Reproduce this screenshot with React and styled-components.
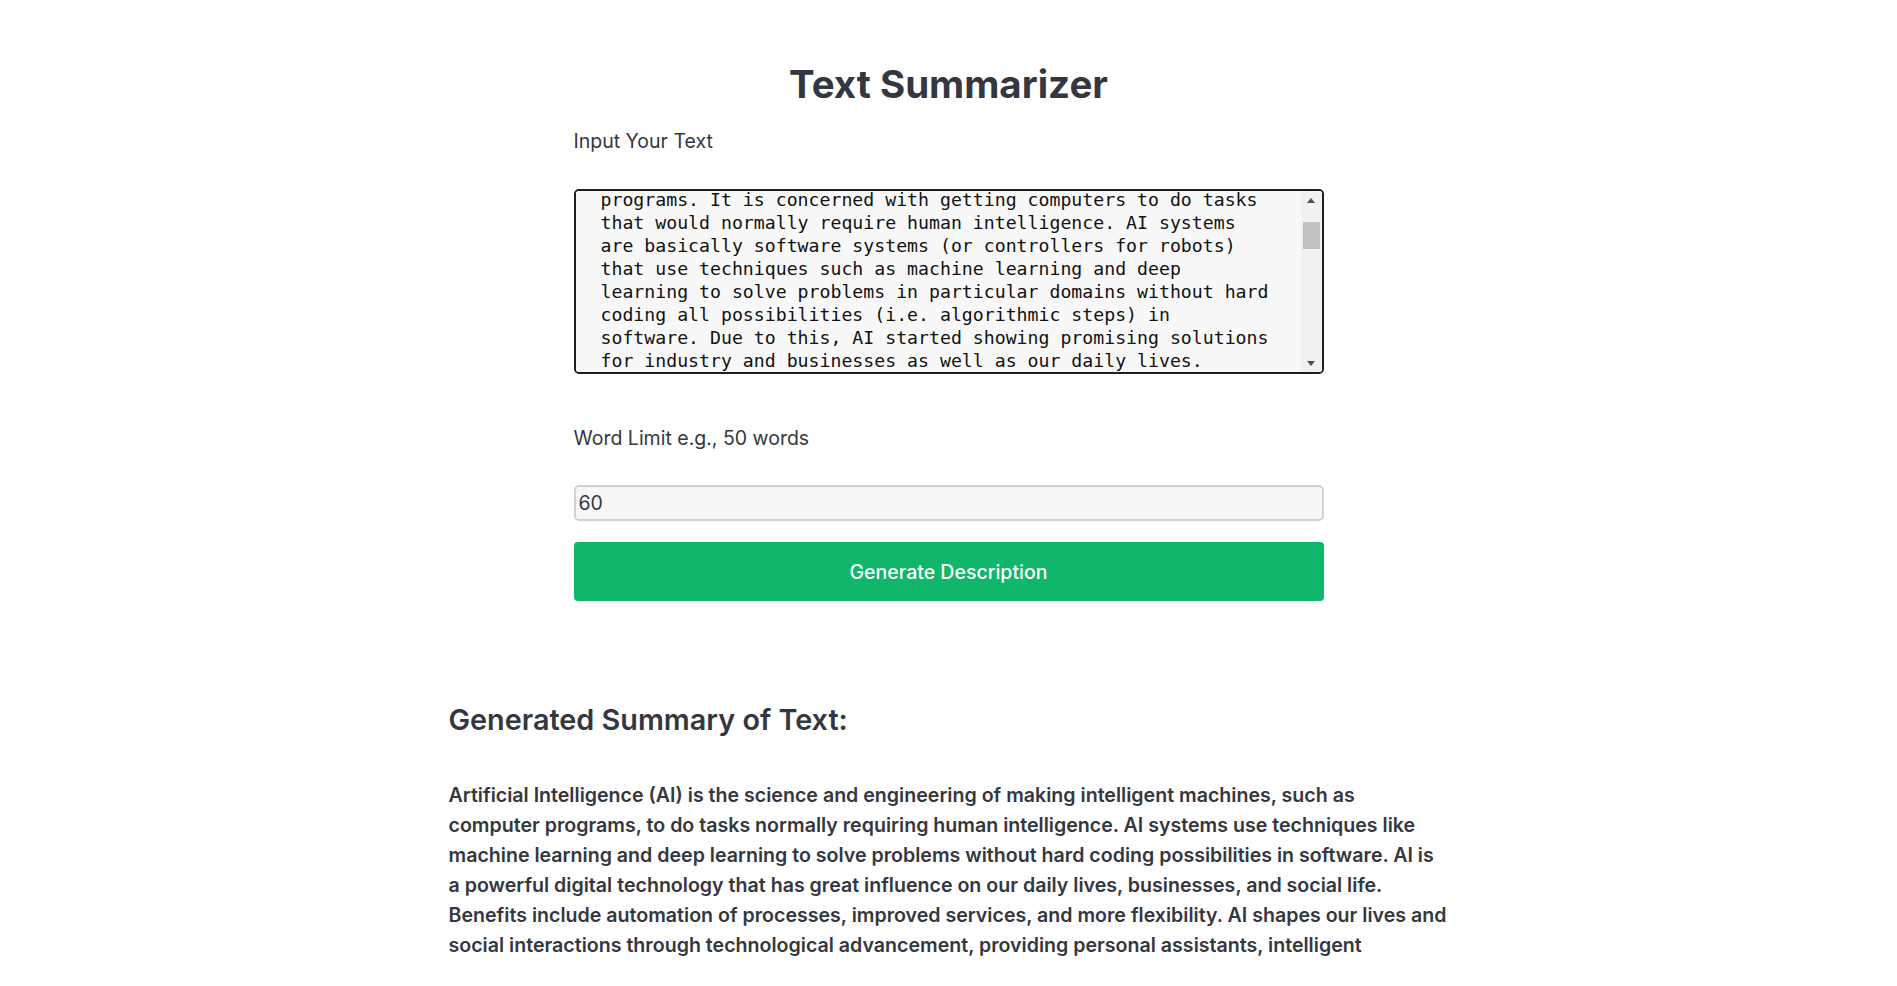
import React, { useLayoutEffect, useRef, useState } from "react";
import styled, { createGlobalStyle } from "styled-components";

const GlobalStyle = createGlobalStyle`
  html, body { margin: 0; padding: 0; background: #ffffff; }
  body { font-family: Inter, "Noto Sans", sans-serif; color: #353740; }
`;

const Page = styled.main`
  padding: 61px 0 40px;
  display: flex;
  flex-direction: column;
  align-items: center;
`;

const Title = styled.h1`
  margin: 0;
  font-size: 38.5px;
  line-height: 46px;
  font-weight: 700;
  color: #353740;
  text-align: center;
`;

const Form = styled.form`
  width: 750px;
  display: flex;
  flex-direction: column;
  margin-top: 23px;
`;

const Label = styled.label`
  font-size: 19.5px;
  line-height: 22px;
  color: #353740;
  margin-top: ${(p) => p.$top || 0}px;
`;

const TextAreaWrap = styled.div`
  position: relative;
  width: 750px;
  height: 185px;
  margin-top: 37px;
`;

const TextArea = styled.textarea`
  display: block;
  box-sizing: border-box;
  width: 100%;
  height: 100%;
  margin: 0;
  padding: 20px 45px 20px 25px;
  border: 2px solid #1e1e1e;
  border-radius: 5px;
  background: #f8f8f8;
  font-family: "DejaVu Sans Mono", "Liberation Mono", monospace;
  font-size: 18.2px;
  line-height: 23px;
  color: #111;
  resize: none;
  overflow-y: auto;
  outline: none;
  scrollbar-width: none;
  &::-webkit-scrollbar { display: none; }
`;

const ScrollBar = styled.div`
  position: absolute;
  top: 2px;
  right: 2px;
  bottom: 2px;
  width: 21px;
  border-radius: 0 3px 3px 0;
  background: #f1f1f1;
  display: flex;
  flex-direction: column;
  pointer-events: none;
`;

const ScrollButton = styled.div`
  flex: 0 0 17px;
  display: flex;
  align-items: center;
  justify-content: center;
`;

const Arrow = styled.span`
  width: 0;
  height: 0;
  border-left: 4.5px solid transparent;
  border-right: 4.5px solid transparent;
  ${(p) =>
    p.$dir === "up"
      ? "border-bottom: 5px solid #505050; margin-top: 2px;"
      : "border-top: 5px solid #505050; margin-top: -1px;"}
`;

const Track = styled.div`
  flex: 1;
  position: relative;
`;

const Thumb = styled.div`
  position: absolute;
  left: 2px;
  right: 2px;
  background: #c1c1c1;
`;

const NumberInput = styled.input`
  box-sizing: border-box;
  width: 750px;
  height: 36px;
  margin-top: 36px;
  padding: 0 3px;
  background: #f7f7f7;
  border: 2px solid #d2d2d2;
  border-radius: 5px;
  font-family: Inter, "Noto Sans", sans-serif;
  font-size: 19.5px;
  color: #353740;
  outline: none;
`;

const Button = styled.button`
  width: 750px;
  height: 59px;
  margin-top: 21px;
  border: none;
  border-radius: 4px;
  background: #10b66a;
  color: #ffffff;
  font-family: Inter, "Noto Sans", sans-serif;
  font-size: 19.5px;
  font-weight: 500;
  cursor: pointer;
`;

const Result = styled.section`
  width: 1000px;
  margin-top: 102px;
`;

const ResultHeading = styled.h2`
  margin: 0;
  font-size: 28.8px;
  line-height: 34px;
  font-weight: 600;
  color: #353740;
`;

const Summary = styled.p`
  margin: 43px 0 0;
  font-size: 19.6px;
  line-height: 30px;
  font-weight: 600;
  color: #353740;
`;

const INPUT_TEXT = `What is Artificial Intelligence?
Artificial Intelligence (AI) is the science and engineering of making intelligent machines, especially smart computer programs. It is concerned with getting computers to do tasks that would normally require human intelligence. AI systems are basically software systems (or controllers for robots) that use techniques such as machine learning and deep learning to solve problems in particular domains without hard coding all possibilities (i.e. algorithmic steps) in software. Due to this, AI started showing promising solutions for industry and businesses as well as our daily lives.

Importance and Advantages of Artificial Intelligence

Advances in computing and digital technologies have a direct influence on our lives, businesses, and social life. This has influenced our daily routines, such as using mobile devices and active involvement on social media. AI systems are the most influential digital technologies. With AI systems, businesses are able to handle large data sets and provide speedy essential input to operations. Moreover, businesses are able to adapt to constant changes and are becoming more flexible.

By introducing Artificial Intelligence systems into devices, new business processes are opting for automation. A new paradigm emerges as a result of such intelligent automation, which now dictates not only how businesses operate but also who does the job. Many manufacturing sites can now operate fully automated with robots and without any human workers. Artificial Intelligence now brings unheard and unexpected innovations to the business world.

Artificial Intelligence shapes our lives and social interactions through technological advancement. There are many AI applications which are specifically developed for providing better services to individuals, such as mobile phones, electronic gadgets, social media platforms etc. We are delegating our activities through intelligent applications, such as personal assistants, intelligent wearable devices and other applications.`;

const SUMMARY =
  "Artificial Intelligence (AI) is the science and engineering of making intelligent machines, such as computer programs, to do tasks normally requiring human intelligence. AI systems use techniques like machine learning and deep learning to solve problems without hard coding possibilities in software. AI is a powerful digital technology that has great influence on our daily lives, businesses, and social life. Benefits include automation of processes, improved services, and more flexibility. AI shapes our lives and social interactions through technological advancement, providing personal assistants, intelligent";

const TRACK = 181 - 34;

export default function App() {
  const areaRef = useRef(null);
  const [thumb, setThumb] = useState({ top: 14, height: 25 });

  const updateThumb = () => {
    const el = areaRef.current;
    if (!el) return;
    const { scrollTop, scrollHeight, clientHeight } = el;
    const height = Math.max(20, (clientHeight / scrollHeight) * TRACK);
    const max = scrollHeight - clientHeight;
    const top = max > 0 ? (scrollTop / max) * (TRACK - height) : 0;
    setThumb({ top, height });
  };

  useLayoutEffect(() => {
    if (areaRef.current) areaRef.current.scrollTop = 20 + 3 * 23 + 3;
    updateThumb();
  }, []);

  return (
    <>
      <GlobalStyle />
      <Page>
        <Title>Text Summarizer</Title>
        <Form onSubmit={(e) => e.preventDefault()}>
          <Label $top={0} htmlFor="text">Input Your Text</Label>
          <TextAreaWrap>
            <TextArea
              id="text"
              ref={areaRef}
              defaultValue={INPUT_TEXT}
              onScroll={updateThumb}
            />
            <ScrollBar>
              <ScrollButton><Arrow $dir="up" /></ScrollButton>
              <Track>
                <Thumb style={{ top: thumb.top, height: thumb.height }} />
              </Track>
              <ScrollButton><Arrow $dir="down" /></ScrollButton>
            </ScrollBar>
          </TextAreaWrap>
          <Label $top={53} htmlFor="limit">Word Limit e.g., 50 words</Label>
          <NumberInput id="limit" type="text" defaultValue="60" />
          <Button type="submit">Generate Description</Button>
        </Form>
        <Result>
          <ResultHeading>Generated Summary of Text:</ResultHeading>
          <Summary>{SUMMARY}</Summary>
        </Result>
      </Page>
    </>
  );
}
